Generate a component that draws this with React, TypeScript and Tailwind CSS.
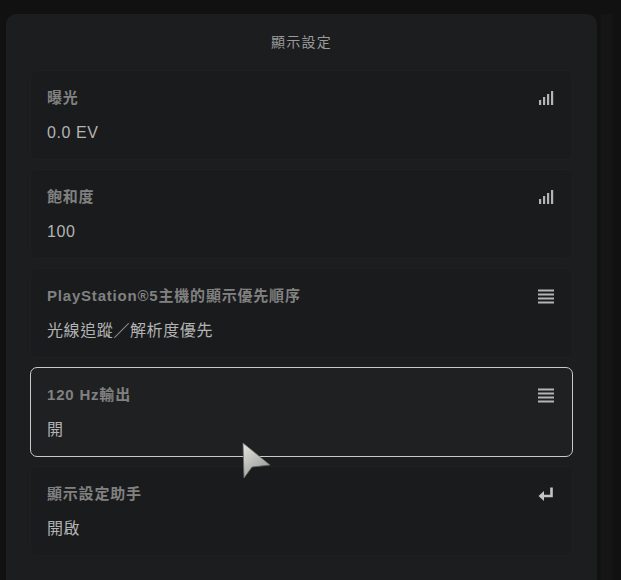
import React from 'react';

type Row = {
  label: string;
  value: string;
  icon: 'signal' | 'list' | 'enter';
  selected?: boolean;
};

const rows: Row[] = [
  { label: '曝光', value: '0.0 EV', icon: 'signal' },
  { label: '飽和度', value: '100', icon: 'signal' },
  { label: 'PlayStation®5主機的顯示優先順序', value: '光線追蹤／解析度優先', icon: 'list' },
  { label: '120 Hz輸出', value: '開', icon: 'list', selected: true },
  { label: '顯示設定助手', value: '開啟', icon: 'enter' },
];

const SignalIcon = () => (
  <svg width="16" height="14" viewBox="0 0 16 14" fill="#b4b4b4">
    <rect x="1" y="9" width="2.2" height="5" />
    <rect x="5" y="6" width="2.2" height="8" />
    <rect x="9" y="3" width="2.2" height="11" />
    <rect x="13" y="0" width="2.2" height="14" />
  </svg>
);

const ListIcon = () => (
  <svg width="16" height="15" viewBox="0 0 16 15" fill="#b4b4b4">
    <rect x="0" y="0.5" width="16" height="2" />
    <rect x="0" y="4.5" width="16" height="2" />
    <rect x="0" y="8.5" width="16" height="2" />
    <rect x="0" y="12.5" width="16" height="2" />
  </svg>
);

const EnterIcon = () => (
  <svg width="16" height="15" viewBox="0 0 16 15" fill="none">
    <path d="M13.5 0.5 V9 H4" stroke="#c4c4c4" strokeWidth="2.6" />
    <path d="M0.5 9 L6 4 V14 Z" fill="#c4c4c4" />
  </svg>
);

const Card = ({ row }: { row: Row }) => {
  const border = row.selected
    ? 'border-[1.5px] border-[#c9c9c9] bg-[#1f2022]'
    : 'border border-[#1f2022] bg-[#1a1b1d]';

  return (
    <div className={`relative h-[90px] rounded-[7px] ${border} pl-[16px] pr-[18px]`}>
      <div className="flex items-center justify-between pt-[16px]">
        <span className="text-[15px] leading-[22px] font-semibold tracking-[0.8px] text-[#818181]">{row.label}</span>
        <span className="flex items-center">
          {row.icon === 'signal' && <SignalIcon />}
          {row.icon === 'list' && <ListIcon />}
          {row.icon === 'enter' && <EnterIcon />}
        </span>
      </div>
      <div className="mt-[13px] text-[16px] leading-[22px] tracking-[0.6px] text-[#b3b3b3]">{row.value}</div>
    </div>
  );
};

export default function App() {
  return (
    <div
      className="relative w-[621px] h-[580px] overflow-hidden bg-[#111111] pt-[14px] pl-[6px]"
      style={{ fontFamily: '"Liberation Sans", "Noto Sans CJK TC", "Noto Sans", sans-serif' }}
    >
      <div className="flex">
        <div className="w-[591px] h-[600px] rounded-[10px] bg-[#1c1d1f]">
          <div className="pt-[17px] text-center text-[14px] leading-[22px] tracking-[1.2px] text-[#9a9a9a]">顯示設定</div>
          <div className="mt-[17px] flex flex-col gap-[9px] px-[24px]">
            {rows.map((row, i) => (
              <Card key={i} row={row} />
            ))}
          </div>
        </div>
        <div className="ml-[4px] w-[12px] h-[600px] bg-[#151515]" />
      </div>

      {/* mouse pointer */}
      <svg className="absolute left-[242px] top-[442px]" width="30" height="38" viewBox="0 0 30 38">
        <defs>
          <linearGradient id="cur" x1="0" y1="0" x2="0.6" y2="1">
            <stop offset="0" stopColor="#e6e6e2" />
            <stop offset="1" stopColor="#9a9a96" />
          </linearGradient>
        </defs>
        <path d="M1 1 L2 36 L10 25 L28 23 Z" fill="url(#cur)" stroke="#6a6a68" strokeWidth="0.8" />
      </svg>
    </div>
  );
}
